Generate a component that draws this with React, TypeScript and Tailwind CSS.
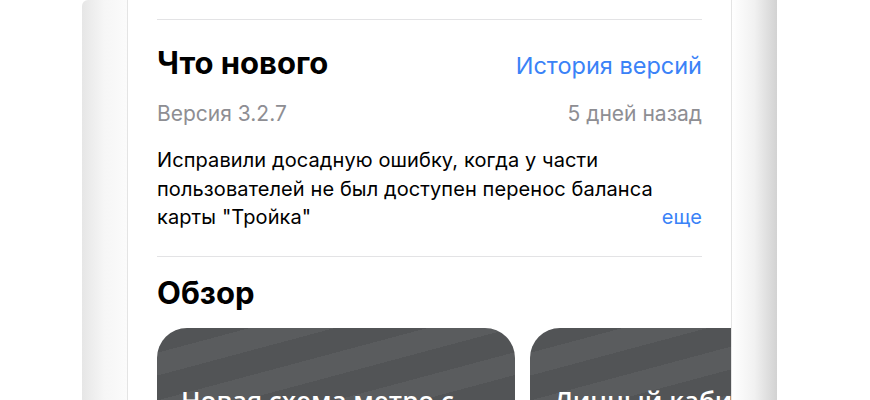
const cards = [
  { title: "Новая схема метро с" },
  { title: "Личный кабинет" },
];

export default function App() {
  return (
    <div className="w-[870px] h-[400px] overflow-hidden bg-white flex pl-[82px] font-['Inter','Liberation_Sans',sans-serif]">
      {/* phone frame */}
      <div className="flex h-[400px]">
        <div className="w-[46px] rounded-tl-[6px] bg-gradient-to-r from-[#e6e6e6] via-[#f6f6f6] to-[#fbfbfb] border-r border-[#e4e4e4]" />
        <div className="w-[603px] bg-white overflow-hidden px-[29px] pt-[19px]">
          <div className="border-t border-[#e3e3e5]" />

          <div className="flex justify-between items-baseline mt-[25px]">
            <h2 className="text-[31px] leading-[36px] font-bold text-black">Что нового</h2>
            <a className="text-[23.5px] leading-[36px] text-[#3a82f7]">История версий</a>
          </div>

          <div className="flex justify-between mt-[17px] text-[21px] leading-[26px] text-[#8e8e93]">
            <span>Версия 3.2.7</span>
            <span>5 дней назад</span>
          </div>

          <div className="flex justify-between items-end mt-[19px] text-[20px] leading-[28.5px] tracking-[0.1px] text-black">
            <p className="whitespace-nowrap">
              Исправили досадную ошибку, когда у части
              <br />
              пользователей не был доступен перенос баланса
              <br />
              карты "Тройка"
            </p>
            <a className="text-[#3a82f7]">еще</a>
          </div>

          <div className="border-t border-[#e3e3e5] mt-[24px]" />

          <h2 className="mt-[18px] text-[31px] leading-[36px] font-bold text-black">Обзор</h2>

          <div className="flex gap-[15px] mt-[17px]">
            {cards.map((c) => (
              <div
                key={c.title}
                className="shrink-0 w-[358px] h-[240px] rounded-[30px] bg-[repeating-linear-gradient(165deg,#525456_0px,#525456_24px,#5a5c5e_24px,#5a5c5e_46px)] px-[24px] pt-[55px]"
              >
                <div className="font-['Open_Sans',sans-serif] font-semibold text-[26px] leading-[34px] text-white whitespace-nowrap">
                  {c.title}
                </div>
              </div>
            ))}
          </div>
        </div>
        <div className="w-[46px] border-l border-[#e4e4e4] bg-gradient-to-r from-[#ffffff] via-[#f1f1f1] to-[#d2d2d2]" />
      </div>
    </div>
  );
}
